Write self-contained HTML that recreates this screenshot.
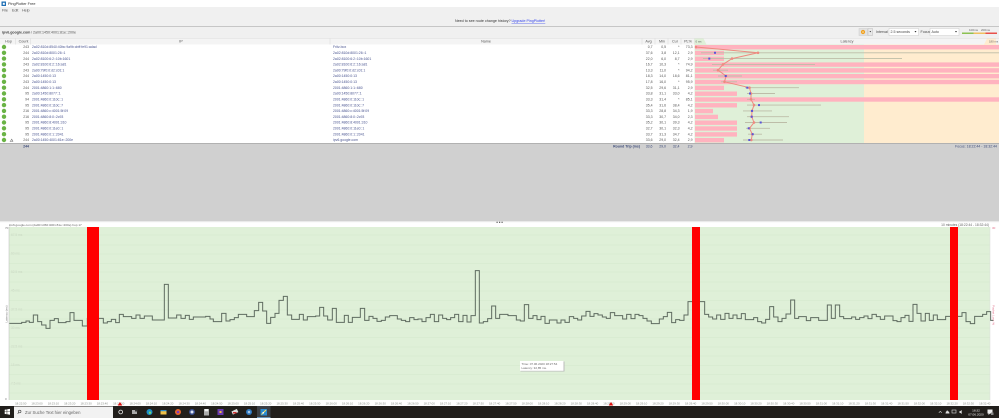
<!DOCTYPE html>
<html><head><meta charset="utf-8"><title>PingPlotter Free</title>
<style>
html,body{margin:0;padding:0;background:#fff;width:999px;height:418px;overflow:hidden}
svg{display:block;font-family:"Liberation Sans",sans-serif;filter:blur(.3px)}
.r text{font-size:3.45px}
.ip{fill:#4a5590}
.h{font-size:3.7px;fill:#555;text-anchor:middle}
.t text{font-size:2.9px;fill:#8a8f88;text-anchor:middle}
.g text{font-size:3.2px;fill:#cbd8c4}
</style></head><body>
<svg width="999" height="418" viewBox="0 0 999 418" xmlns="http://www.w3.org/2000/svg">
<rect width="999" height="418" fill="#fff"/>
<!-- title + menu -->
<rect x="1.5" y="1.5" width="4.5" height="4.5" fill="#1f6fb5"/><rect x="2.8" y="2.8" width="2" height="2" fill="#fff"/>
<text x="8" y="5" font-size="3.8" fill="#333">PingPlotter Free</text>
<rect y="7" width="999" height="19" fill="#f0f0f0"/>
<text x="2" y="11.5" font-size="3.7" fill="#555">File</text><text x="12" y="11.5" font-size="3.7" fill="#555">Edit</text><text x="22" y="11.5" font-size="3.7" fill="#555">Help</text>
<text x="455" y="22" font-size="3.65" fill="#333">Need to see route change history?</text>
<text x="511.500" y="22" font-size="3.65" fill="#3344ee" text-decoration="underline">Upgrade PingPlotter!</text>
<rect y="26" width="999" height="1" fill="#c6c6c6"/>
<rect y="27" width="999" height="11" fill="#f0f0f0"/>
<text x="2" y="33.5" font-size="3.6" font-weight="bold" fill="#444">ipv6.google.com</text><text x="31" y="33.5" font-size="3.6" fill="#555">/ 2a00:1450:4001:81e::200e</text>
<!-- toolbar -->
<rect x="859" y="28.5" width="8.5" height="7" fill="#e2e2e2" stroke="#ccc" stroke-width=".5"/><circle cx="863" cy="32" r="2.1" fill="#f0a020"/><circle cx="863" cy="32" r=".8" fill="#fbe3ae"/>
<rect x="868" y="28.5" width="4.5" height="7" fill="#e8e8e8" stroke="#bbb" stroke-width=".5"/><path d="M869.5 31h1.6l-.8 1.4z" fill="#333"/>
<text x="876" y="33.2" font-size="3.6" fill="#444">Interval</text>
<rect x="889" y="28.5" width="29.5" height="7" fill="#fff" stroke="#ccc" stroke-width=".5"/><text x="890.5" y="33.2" font-size="3.6" fill="#444">2.5 seconds</text><path d="M914.5 31h2l-1 1.5z" fill="#333"/>
<text x="920.5" y="33.2" font-size="3.6" fill="#444">Focus</text>
<rect x="930" y="28.5" width="29" height="7" fill="#fff" stroke="#ccc" stroke-width=".5"/><text x="931.5" y="33.2" font-size="3.6" fill="#444">Auto</text><path d="M955 31h2l-1 1.5z" fill="#333"/>
<text x="969" y="31" font-size="3" fill="#666">100ms</text><text x="981" y="31" font-size="3" fill="#666">200ms</text>
<rect x="962" y="32.5" width="11.5" height="1.5" fill="#8cc152"/><rect x="973.5" y="32.5" width="12" height="1.5" fill="#f0c060"/><rect x="985.5" y="32.5" width="11.5" height="1.5" fill="#e8504a"/>
<!-- table header -->
<rect y="38" width="999" height="6.5" fill="#f4f4f4"/>
<rect y="38" width="999" height=".5" fill="#ddd"/>
<path d="M15.5 38.5v6M30.5 38.5v6M330 38.5v6M642 38.5v6M655 38.5v6M668 38.5v6M681 38.5v6M694.5 38.5v6" stroke="#d8d8d8" stroke-width=".5"/>
<g class="h"><text class="h" x="8.5" y="42.6">Hop</text><text class="h" x="23.5" y="42.6">Count</text><text class="h" x="181" y="42.6">IP</text><text class="h" x="486" y="42.6">Name</text><text class="h" x="648.5" y="42.6">Avg</text><text class="h" x="662" y="42.6">Min</text><text class="h" x="675" y="42.6">Cur</text><text class="h" x="688" y="42.6">PL%</text><text class="h" x="847" y="42.6">Latency</text></g>
<path d="M694.5 38.5h9l3 6h-12z" fill="#dff0d8"/><text x="695.5" y="42.4" font-size="2.8" fill="#666">0 ms</text>
<path d="M996 38.5h-9l-3 6h12z" fill="#ffeccf"/><text x="989" y="42.4" font-size="2.8" fill="#666">180 ms</text>
<!-- latency backgrounds -->
<rect x="694.5" y="44.5" width="169.5" height="98.5" fill="#dff0d8"/>
<rect x="864" y="44.5" width="135" height="98.5" fill="#ffeccf"/>
<!-- pink bars -->
<g fill="#ffb3bf">
<rect x="695" y="45" width="304" height="4.4"/><rect x="695" y="50.8" width="29" height="4.4"/><rect x="695" y="56.6" width="29" height="4.4"/><rect x="695" y="62.4" width="304" height="4.4"/><rect x="695" y="68.2" width="304" height="4.4"/><rect x="695" y="74" width="304" height="4.4"/><rect x="695" y="79.8" width="304" height="4.4"/><rect x="695" y="85.7" width="29" height="4.4"/><rect x="695" y="91.5" width="42" height="4.4"/><rect x="695" y="97.3" width="304" height="4.4"/><rect x="695" y="103.1" width="42" height="4.4"/><rect x="695" y="108.9" width="18" height="4.4"/><rect x="695" y="114.7" width="23" height="4.4"/><rect x="695" y="120.5" width="42" height="4.4"/><rect x="695" y="126.3" width="42" height="4.4"/><rect x="695" y="132.2" width="42" height="4.4"/><rect x="695" y="138" width="29" height="4.4"/>
</g>
<!-- whiskers -->
<g stroke="#bdbda8" stroke-width=".9" fill="none">
<path d="M701 52.8H999M703 58.6H902M712 64.4H815M713 70.2H728M718 76H742M721 81.8H737M745 87.7H799M747 93.5H775M747 99.3H755M747 105.1H821M743 110.9H772M747 116.7H789M745 122.5H787M746 128.3H770M748 134.2H762M743 140H783"/>
</g>
<!-- latency line -->
<polyline points="696,47 758,52.8 732,58.6 723,64.4 718,70.2 726,76 724.5,81.8 749.5,87.7 751,93.5 751,99.3 754,105.1 752,110.9 751.7,116.7 754,122.5 749.5,128.3 752.3,134.2 751.3,140" fill="none" stroke="#ee8a80" stroke-width="1"/>
<g fill="#ee8a80">
<circle cx="696" cy="47" r="1.3"/><circle cx="758" cy="52.8" r="1.3"/><circle cx="732" cy="58.6" r="1.3"/><circle cx="723" cy="64.4" r="1.3"/><circle cx="718" cy="70.2" r="1.3"/><circle cx="726" cy="76" r="1.3"/><circle cx="724.5" cy="81.8" r="1.3"/><circle cx="749.5" cy="87.7" r="1.3"/><circle cx="751" cy="93.5" r="1.3"/><circle cx="751" cy="99.3" r="1.3"/><circle cx="754" cy="105.1" r="1.3"/><circle cx="752" cy="110.9" r="1.3"/><circle cx="751.7" cy="116.7" r="1.3"/><circle cx="754" cy="122.5" r="1.3"/><circle cx="749.5" cy="128.3" r="1.3"/><circle cx="752.3" cy="134.2" r="1.3"/><circle cx="751.3" cy="140" r="1.3"/>
</g>
<g fill="#5a55d8">
<rect x="714" y="51.8" width="2" height="2"/><rect x="708.3" y="57.6" width="2" height="2"/><rect x="724.7" y="75" width="2" height="2"/><rect x="746.3" y="86.7" width="2" height="2"/><rect x="749" y="92.5" width="2" height="2"/><rect x="758" y="104.1" width="2" height="2"/><rect x="751" y="109.9" width="2" height="2"/><rect x="750.7" y="115.7" width="2" height="2"/><rect x="759.7" y="121.5" width="2" height="2"/><rect x="747.7" y="127.3" width="2" height="2"/><rect x="751.7" y="133.2" width="2" height="2"/><rect x="748.3" y="139" width="2" height="2"/>
</g>
<!-- rows -->
<g fill="#6ab345">
<circle cx="4" cy="47" r="2.2"/><circle cx="4" cy="52.8" r="2.2"/><circle cx="4" cy="58.6" r="2.2"/><circle cx="4" cy="64.4" r="2.2"/><circle cx="4" cy="70.2" r="2.2"/><circle cx="4" cy="76" r="2.2"/><circle cx="4" cy="81.8" r="2.2"/><circle cx="4" cy="87.7" r="2.2"/><circle cx="4" cy="93.5" r="2.2"/><circle cx="4" cy="99.3" r="2.2"/><circle cx="4" cy="105.1" r="2.2"/><circle cx="4" cy="110.9" r="2.2"/><circle cx="4" cy="116.7" r="2.2"/><circle cx="4" cy="122.5" r="2.2"/><circle cx="4" cy="128.3" r="2.2"/><circle cx="4" cy="134.2" r="2.2"/><circle cx="4" cy="140" r="2.2"/>
</g>
<path d="M10.5 141.2l1.2-2 1.2 2M9.8 141.5h3.4" stroke="#777" stroke-width=".6" fill="none"/>
<g class="r">
<g text-anchor="end" fill="#555"><text x="29" y="48.2">243</text><text x="29" y="54">244</text><text x="29" y="59.8">244</text><text x="29" y="65.6">243</text><text x="29" y="71.4">243</text><text x="29" y="77.2">244</text><text x="29" y="83">243</text><text x="29" y="88.9">244</text><text x="29" y="94.7">95</text><text x="29" y="100.5">94</text><text x="29" y="106.3">95</text><text x="29" y="112.1">216</text><text x="29" y="117.9">216</text><text x="29" y="123.7">95</text><text x="29" y="129.5">95</text><text x="29" y="135.4">95</text><text x="29" y="141.2">244</text></g>
<g class="ip"><text x="32" y="48.2">2a02:810d:8540:40bc:9a9b:cbff:fe91:adad</text><text x="32" y="54">2a02:810d:8001:26::1</text><text x="32" y="59.8">2a02:8100:6:2::10b:1601</text><text x="32" y="65.6">2a02:8100:6:2::16:a81</text><text x="32" y="71.4">2a00:79f0:0:d2:c01:1</text><text x="32" y="77.2">2a00:1450:0:13</text><text x="32" y="83">2a00:1450:0:13</text><text x="32" y="88.9">2001:4860:1:1::680</text><text x="32" y="94.7">2a00:1450:8077::1</text><text x="32" y="100.5">2001:4860:0:110c::1</text><text x="32" y="106.3">2001:4860:0:110c::7</text><text x="32" y="112.1">2001:4860:c:4001:5f:09</text><text x="32" y="117.9">2001:4860:8:0::2c93</text><text x="32" y="123.7">2001:4860:8:4001:310</text><text x="32" y="129.5">2001:4860:0:11e0::1</text><text x="32" y="135.4">2001:4860:0:1::2041</text><text x="32" y="141.2">2a00:1450:4001:81e::200e</text></g>
<g class="ip"><text x="333" y="48.2">Fritz.box</text><text x="333" y="54">2a02:810d:8001:26::1</text><text x="333" y="59.8">2a02:8100:6:2::10b:1601</text><text x="333" y="65.6">2a02:8100:6:2::16:a81</text><text x="333" y="71.4">2a00:79f0:0:d2:c01:1</text><text x="333" y="77.2">2a00:1450:0:13</text><text x="333" y="83">2a00:1450:0:13</text><text x="333" y="88.9">2001:4860:1:1::680</text><text x="333" y="94.7">2a00:1450:8077::1</text><text x="333" y="100.5">2001:4860:0:110c::1</text><text x="333" y="106.3">2001:4860:0:110c::7</text><text x="333" y="112.1">2001:4860:c:4001:5f:09</text><text x="333" y="117.9">2001:4860:8:0::2c93</text><text x="333" y="123.7">2001:4860:8:4001:310</text><text x="333" y="129.5">2001:4860:0:11e0::1</text><text x="333" y="135.4">2001:4860:0:1::2041</text><text x="333" y="141.2">ipv6.google.com</text></g>
<g text-anchor="end" fill="#555"><text x="652.5" y="48.2">0,7</text><text x="652.5" y="54">37,6</text><text x="652.5" y="59.8">22,0</text><text x="652.5" y="65.6">16,7</text><text x="652.5" y="71.4">13,3</text><text x="652.5" y="77.2">18,3</text><text x="652.5" y="83">17,8</text><text x="652.5" y="88.9">32,5</text><text x="652.5" y="94.7">33,8</text><text x="652.5" y="100.5">33,3</text><text x="652.5" y="106.3">35,4</text><text x="652.5" y="112.1">33,3</text><text x="652.5" y="117.9">33,3</text><text x="652.5" y="123.7">35,2</text><text x="652.5" y="129.5">32,7</text><text x="652.5" y="135.4">33,7</text><text x="652.5" y="141.2">33,6</text></g>
<g text-anchor="end" fill="#555"><text x="666" y="48.2">0,5</text><text x="666" y="54">3,8</text><text x="666" y="59.8">6,0</text><text x="666" y="65.6">10,3</text><text x="666" y="71.4">11,0</text><text x="666" y="77.2">14,0</text><text x="666" y="83">16,0</text><text x="666" y="88.9">29,6</text><text x="666" y="94.7">31,1</text><text x="666" y="100.5">31,4</text><text x="666" y="106.3">31,6</text><text x="666" y="112.1">28,8</text><text x="666" y="117.9">30,7</text><text x="666" y="123.7">30,1</text><text x="666" y="129.5">30,1</text><text x="666" y="135.4">31,3</text><text x="666" y="141.2">29,0</text></g>
<g text-anchor="end" fill="#555"><text x="679.5" y="48.2">*</text><text x="679.5" y="54">12,1</text><text x="679.5" y="59.8">8,7</text><text x="679.5" y="65.6">*</text><text x="679.5" y="71.4">*</text><text x="679.5" y="77.2">18,6</text><text x="679.5" y="83">*</text><text x="679.5" y="88.9">31,1</text><text x="679.5" y="94.7">33,0</text><text x="679.5" y="100.5">*</text><text x="679.5" y="106.3">38,4</text><text x="679.5" y="112.1">34,3</text><text x="679.5" y="117.9">34,0</text><text x="679.5" y="123.7">39,3</text><text x="679.5" y="129.5">32,3</text><text x="679.5" y="135.4">34,7</text><text x="679.5" y="141.2">32,4</text></g>
<g text-anchor="end" fill="#555"><text x="692.5" y="48.2">73,3</text><text x="692.5" y="54">2,9</text><text x="692.5" y="59.8">2,9</text><text x="692.5" y="65.6">74,9</text><text x="692.5" y="71.4">94,2</text><text x="692.5" y="77.2">81,1</text><text x="692.5" y="83">95,9</text><text x="692.5" y="88.9">2,9</text><text x="692.5" y="94.7">4,2</text><text x="692.5" y="100.5">85,1</text><text x="692.5" y="106.3">4,2</text><text x="692.5" y="112.1">1,9</text><text x="692.5" y="117.9">2,3</text><text x="692.5" y="123.7">4,2</text><text x="692.5" y="129.5">4,2</text><text x="692.5" y="135.4">4,2</text><text x="692.5" y="141.2">2,9</text></g>
</g>
<!-- summary / grey area -->
<rect y="143" width="999" height="78" fill="#d0d0d0"/>
<rect y="143" width="999" height=".8" fill="#aaa"/>
<g font-size="3.5" fill="#3c4a78" text-anchor="end">
<text x="29" y="147.6" font-weight="bold">244</text><text x="640" y="147.6" font-weight="bold">Round Trip (ms)</text><text x="652.5" y="147.6">33,6</text><text x="666" y="147.6">29,0</text><text x="679.5" y="147.6">32,4</text><text x="692.5" y="147.6">2,9</text><text x="997" y="147.6">Focus: 18:22:44 - 18:32:44</text>
</g>
<!-- splitter -->
<rect y="221" width="999" height="1.2" fill="#eaeaea"/>
<g fill="#555"><rect x="496.5" y="221.7" width="1.2" height="1.2"/><rect x="499" y="221.7" width="1.2" height="1.2"/><rect x="501.5" y="221.7" width="1.2" height="1.2"/></g>
<text x="9" y="226" font-size="3.1" fill="#666">ipv6.google.com (2a00:1450:4001:81e::200e) hop 17</text>
<text x="989" y="226" font-size="3.3" fill="#666" text-anchor="end">10 minutes (18:22:44 - 18:32:44)</text>
<!-- chart -->
<rect x="9" y="227" width="981" height="173" fill="#dff0d8"/>
<path d="M9 235H990M9 245H990M9 254H990M9 263.500H990M9 272H990M9 282H990M9 291H990M9 300.500H990M9 310H990M9 319H990M9 328H990M9 337.500H990M9 347H990M9 356H990M9 365.500H990M9 374.500H990M9 384H990M9 393H990" stroke="#d4e8cc" stroke-width=".6"/>
<g class="g"><text x="11" y="236">67.5 ms</text><text x="11" y="254.500">60 ms</text><text x="11" y="273">52.5 ms</text><text x="11" y="291.500">45 ms</text><text x="11" y="310.500">37.5 ms</text><text x="11" y="329">30 ms</text><text x="11" y="347.500">22.5 ms</text><text x="11" y="366">15 ms</text><text x="11" y="384.500">7.5 ms</text></g>
<path d="M9 227V400" stroke="#bbb" stroke-width=".5"/><path d="M990 227V400" stroke="#ddd" stroke-width=".5"/>
<text x="5" y="229" font-size="3" fill="#777">70</text><text x="5" y="400" font-size="3" fill="#777">0</text>
<text x="992" y="229" font-size="3" fill="#e0708a">30</text>
<text transform="translate(7.500,314) rotate(-90)" font-size="3" fill="#777" text-anchor="middle">Latency (ms)</text>
<text transform="translate(992.500,315) rotate(90)" font-size="3" fill="#e0708a" text-anchor="middle">Packet Loss %</text>
<!-- latency trace, coordinates in 3x space -->
<g transform="translate(0,215) scale(.33333)" fill="none" stroke-linejoin="miter">
<path id="a" stroke="#5f6b60" stroke-width="3" d="M28 325H65V322H78V318H88V322H100V300H113V320H125V330H138V340H150V316H163V311H175V323H198V320H210V293H222V316H247V333H262V310H310V324H322V320H334V313H347V323H358V298H370V305H395V310H408V300H420V310H433V303H457V315H493V208H505V309H530V300H543V310H556V301H568V313H580V306H617V304H630V312H640V320H665V295H678V318H690V314H703V308H715V298H740V305H763V287H776V262H788V288H800V325H812V307H825V295H837V256H850V244H862V300H875V313H898V298H910V315H922V305H947V303H959V277H971V303H983V315H997V280H1009V322H1033V301H1045V322H1057V307H1081V280H1094V316H1107V304H1119V310H1131V319H1144V316H1156V306H1169V302H1192V312H1204V316H1217V320H1229V308H1242V314H1254V312H1266V320H1278V308H1291V298H1303V320H1316V300H1328V310H1340V314H1352V308H1364V298H1376V320H1389V301H1401V321H1413V302H1426V167H1438V324H1450V320H1463V311H1475V273H1487V310H1499V298H1524V302H1549V315H1561V318H1573V269H1586V310H1599V302H1611V314H1623V304H1635V325H1648V315H1671V324H1683V315H1695V322H1708V305H1721V310H1733V315H1745V303H1758V289H1770V304H1782V296H1794V300H1807V306H1819V310H1831V293H1844V302H1868V312H1880V298H1893V311H1905V298H1917V302H1929V310H1941V318H1954V326H1978V312H1990V305H2002V292H2015V323H2027V314H2039V316H2052V300H2064V260H2114V298H2126V306H2138V312H2150V300H2162V313H2175V295H2187V310H2199V300H2211V311H2224V296H2236V314H2261V308H2273V320H2285V324H2297V313H2309V275H2321V306H2334V320H2346V310H2358V297H2372V255H2384V310H2396V305H2419V317H2432V308H2456V316H2482V270H2494V310H2506V270H2519V305H2531V311H2555V306H2567V313H2579V308H2592V303H2604V311H2616V298H2629V305H2641V313H2654V303H2679V317H2691V320H2703V308H2715V301H2727V319H2739V268H2751V295H2763V318H2776V295H2788V316H2800V300H2812V314H2837V304H2886V293H2898V320H2911V326H2924V304H2948V298H2960V290H2972V316H2980"/>
</g>
<!-- red bars -->
<rect x="87" y="227" width="12" height="173" fill="#f00"/><rect x="692" y="227" width="8" height="173" fill="#f00"/><rect x="950" y="227" width="8" height="173" fill="#f00"/>
<!-- tooltip -->
<rect x="520.500" y="361.500" width="44" height="10" fill="#bbb"/>
<rect x="520" y="361" width="43.500" height="9.800" fill="#fff"/>
<text x="521.500" y="364.800" font-size="3" fill="#666">Time: 07.06.2020 18:27:54</text><text x="521.500" y="369" font-size="3" fill="#666">Latency: 32,85 ms.</text>
<!-- time axis -->
<g class="t"><text x="20.700" y="404.500">18:22:50</text><text x="37" y="404.500">18:23:00</text><text x="53.400" y="404.500">18:23:10</text><text x="69.700" y="404.500">18:23:20</text><text x="86.100" y="404.500">18:23:30</text><text x="102.400" y="404.500">18:23:40</text><text x="118.700" y="404.500">18:23:50</text><text x="135.100" y="404.500">18:24:00</text><text x="151.400" y="404.500">18:24:10</text><text x="167.800" y="404.500">18:24:20</text><text x="184.100" y="404.500">18:24:30</text><text x="200.400" y="404.500">18:24:40</text><text x="216.800" y="404.500">18:24:50</text><text x="233.100" y="404.500">18:25:00</text><text x="249.500" y="404.500">18:25:10</text><text x="265.800" y="404.500">18:25:20</text><text x="282.100" y="404.500">18:25:30</text><text x="298.500" y="404.500">18:25:40</text><text x="314.800" y="404.500">18:25:50</text><text x="331.200" y="404.500">18:26:00</text><text x="347.500" y="404.500">18:26:10</text><text x="363.800" y="404.500">18:26:20</text><text x="380.200" y="404.500">18:26:30</text><text x="396.500" y="404.500">18:26:40</text><text x="412.900" y="404.500">18:26:50</text><text x="429.200" y="404.500">18:27:00</text><text x="445.500" y="404.500">18:27:10</text><text x="461.900" y="404.500">18:27:20</text><text x="478.200" y="404.500">18:27:30</text><text x="494.600" y="404.500">18:27:40</text><text x="510.900" y="404.500">18:27:50</text><text x="527.200" y="404.500">18:28:00</text><text x="543.600" y="404.500">18:28:10</text><text x="559.900" y="404.500">18:28:20</text><text x="576.300" y="404.500">18:28:30</text><text x="592.600" y="404.500">18:28:40</text><text x="608.900" y="404.500">18:28:50</text><text x="625.300" y="404.500">18:29:00</text><text x="641.600" y="404.500">18:29:10</text><text x="658" y="404.500">18:29:20</text><text x="674.300" y="404.500">18:29:30</text><text x="690.600" y="404.500">18:29:40</text><text x="707" y="404.500">18:29:50</text><text x="723.300" y="404.500">18:30:00</text><text x="739.700" y="404.500">18:30:10</text><text x="756" y="404.500">18:30:20</text><text x="772.300" y="404.500">18:30:30</text><text x="788.700" y="404.500">18:30:40</text><text x="805" y="404.500">18:30:50</text><text x="821.400" y="404.500">18:31:00</text><text x="837.700" y="404.500">18:31:10</text><text x="854" y="404.500">18:31:20</text><text x="870.400" y="404.500">18:31:30</text><text x="886.700" y="404.500">18:31:40</text><text x="903.100" y="404.500">18:31:50</text><text x="919.400" y="404.500">18:32:00</text><text x="935.700" y="404.500">18:32:10</text><text x="952.100" y="404.500">18:32:20</text><text x="968.400" y="404.500">18:32:30</text><text x="984.800" y="404.500">18:32:40</text></g>
<path d="M117.700 405.500l2.300-3.500 2.300 3.500zM608.700 405.500l2.300-3.500 2.300 3.500z" fill="#e01010"/>
<!-- taskbar -->
<rect y="406" width="999" height="12" fill="#221f1c"/>
<path d="M4.700 409.700l2-.3v2.200h-2zM7.200 409.300l2.800-.4v2.700H7.200zM4.700 412h2v2.200l-2-.3zM7.200 412H10v2.700l-2.800-.4z" fill="#fff"/>
<rect x="14" y="406.500" width="99" height="11.500" fill="#f2f2f2"/>
<circle cx="19.700" cy="411.500" r="1.300" fill="none" stroke="#444" stroke-width=".6"/><path d="M18.800 412.500l-1.200 1.300" stroke="#444" stroke-width=".6"/>
<text x="25" y="413.800" font-size="4.25" fill="#666">Zur Suche Text hier eingeben</text>
<circle cx="120.700" cy="412" r="1.900" fill="none" stroke="#eee" stroke-width=".8"/>
<rect x="132" y="410" width="5" height="4" fill="#aaa"/><rect x="135" y="409.500" width="2.500" height="2" fill="#333"/>
<circle cx="149.500" cy="412" r="3" fill="#1c8fc9"/><circle cx="150" cy="412.700" r="1.200" fill="#7bd96b"/>
<rect x="160.500" y="410" width="6" height="4.500" fill="#f0c14a"/><rect x="160.500" y="410" width="6" height="1.200" fill="#2a88c8"/>
<circle cx="178" cy="412" r="3" fill="#e8662a"/><circle cx="178" cy="412" r="1.300" fill="#7a3bc0"/>
<circle cx="192" cy="412" r="3" fill="#3a4f8f"/><circle cx="192" cy="412" r="1.500" fill="#dfe6f5"/>
<rect x="204" y="409" width="5" height="6.500" fill="#aaa"/><rect x="204.700" y="409" width="3.500" height="2.300" fill="#eee"/>
<rect x="217.500" y="409" width="6" height="6" fill="#6a3ab0"/><rect x="219.500" y="411" width="2" height="2" fill="#f0c040"/>
<rect x="232" y="410" width="6" height="3.500" fill="#ddd" transform="rotate(-25 235 412)"/><rect x="233" y="412" width="3.500" height="1.500" fill="#d03030"/>
<circle cx="249" cy="412" r="3" fill="#2e78c0"/><circle cx="249" cy="412" r="1.300" fill="#a9c7e6"/>
<rect x="257" y="406" width="13.500" height="12" fill="#3b3f45"/><rect x="257" y="417.300" width="13.500" height=".7" fill="#7db8e8"/>
<rect x="260.500" y="409" width="6.500" height="6.500" fill="#2a8ad0"/><path d="M261.500 414.500l4.500-4.500" stroke="#ffe050" stroke-width="1"/><rect x="262.500" y="412" width="1.500" height="1.500" fill="#fff"/>
<!-- tray -->
<path d="M938.800 412.800l1.500-1.500 1.500 1.500" stroke="#ddd" stroke-width=".6" fill="none"/>
<path d="M945.500 413.500h4l-.5-2h-1l-.4-1h-.7l-.4 1h-.5z" fill="#ddd"/>
<rect x="952" y="410" width="4" height="3" fill="none" stroke="#ddd" stroke-width=".6"/>
<path d="M959.500 411h1l1.200-1v4l-1.200-1h-1z" fill="#ddd"/>
<text x="976" y="411.300" font-size="3.100" fill="#eee" text-anchor="middle">18:32</text>
<text x="976" y="415.700" font-size="3.100" fill="#eee" text-anchor="middle">07.06.2020</text>
<rect x="987.500" y="409.500" width="5" height="4" fill="#eee"/><path d="M988.500 413.500v1.500l1.500-1.500z" fill="#eee"/><rect x="991" y="412.500" width="2.500" height="2.500" fill="#888"/>
</svg>
</body></html>
